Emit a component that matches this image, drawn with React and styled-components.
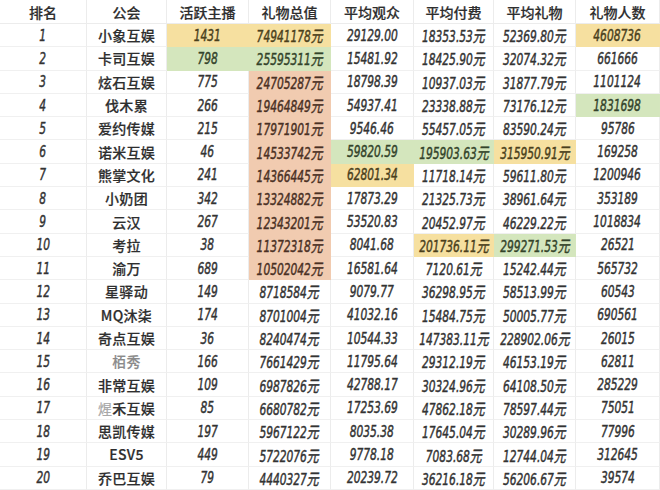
import React from 'react';
import styled, { createGlobalStyle } from 'styled-components';

const GlobalStyle = createGlobalStyle`
  html, body {
    margin: 0;
    padding: 0;
    background: #ffffff;
  }
`;

const fills = {
  y: { bg: '#f6e0a0', fg: '#4a3f1c' },
  g: { bg: '#d4e6bd', fg: '#33432a' },
  o: { bg: '#f1cbb0', fg: '#4a3024' },
};

const headers = ['排名', '公会', '活跃主播', '礼物总值', '平均观众', '平均付费', '平均礼物', '礼物人数'];

const rows = [
  ['小象互娱', '1431', '74941178元', '29129.00', '18353.53元', '52369.80元', '4608736', { 2: 'y', 3: 'y', 7: 'y' }],
  ['卡司互娱', '798', '25595311元', '15481.92', '18425.90元', '32074.32元', '661666', { 2: 'g', 3: 'g' }],
  ['炫石互娱', '775', '24705287元', '18798.39', '10937.03元', '31877.79元', '1101124', { 3: 'o' }],
  ['伐木累', '266', '19464849元', '54937.41', '23338.88元', '73176.12元', '1831698', { 3: 'o', 7: 'g' }],
  ['爱约传媒', '215', '17971901元', '9546.46', '55457.05元', '83590.24元', '95786', { 3: 'o' }],
  ['诺米互娱', '46', '14533742元', '59820.59', '195903.63元', '315950.91元', '169258', { 3: 'o', 4: 'g', 5: 'g', 6: 'y' }],
  ['熊掌文化', '241', '14366445元', '62801.34', '11718.14元', '59611.80元', '1200946', { 3: 'o', 4: 'y' }],
  ['小奶团', '342', '13324882元', '17873.29', '21325.73元', '38961.64元', '353189', { 3: 'o' }],
  ['云汉', '267', '12343201元', '53520.83', '20452.97元', '46229.22元', '1018834', { 3: 'o' }],
  ['考拉', '38', '11372318元', '8041.68', '201736.11元', '299271.53元', '26521', { 3: 'o', 5: 'y', 6: 'g' }],
  ['渝万', '689', '10502042元', '16581.64', '7120.61元', '15242.44元', '565732', { 3: 'o' }],
  ['星驿动', '149', '8718584元', '9079.77', '36298.95元', '58513.99元', '60543', {}],
  ['MQ沐柒', '174', '8701004元', '41032.16', '15484.75元', '50005.77元', '690561', {}],
  ['奇点互娱', '36', '8240474元', '10544.33', '147383.11元', '228902.06元', '26015', {}],
  ['栢秀', '166', '7661429元', '11795.64', '29312.19元', '46153.19元', '62811', {}],
  ['非常互娱', '109', '6987826元', '42788.17', '30324.96元', '64108.50元', '285229', {}],
  ['煋禾互娱', '85', '6680782元', '17253.69', '47862.18元', '78597.44元', '75051', {}],
  ['思凯传媒', '197', '5967122元', '8035.38', '17645.04元', '30289.96元', '77996', {}],
  ['ESV5', '449', '5722076元', '9778.18', '7083.68元', '12744.04元', '312645', {}],
  ['乔巴互娱', '79', '4440327元', '20239.72', '36216.18元', '56206.67元', '39574', {}],
];

const Table = styled.div`
  display: grid;
  grid-template-columns: 87px 80px 82px 82px 83px 80px 82px 84px;
  grid-template-rows: 24px repeat(20, 23.3px);
  width: 660px;
  height: 490px;
  background: #ffffff;
`;

const HeadCell = styled.div`
  display: flex;
  align-items: center;
  justify-content: center;
  border-right: 1px solid #ececec;
  border-bottom: 1px solid #ececec;
  font-family: 'Noto Sans CJK SC', sans-serif;
  font-weight: 500;
  font-size: 14px;
  color: #2e2e2e;
  -webkit-text-stroke: 0.2px currentColor;
`;

const Cell = styled.div`
  display: flex;
  align-items: center;
  justify-content: center;
  white-space: nowrap;
  background: ${(p) => (p.$fill ? fills[p.$fill].bg : '#ffffff')};
  color: ${(p) => (p.$fill ? fills[p.$fill].fg : '#333333')};
  border-right: 1px solid ${(p) => (p.$fill ? fills[p.$fill].bg : '#ececec')};
  border-bottom: 1px solid ${(p) => (p.$fill ? fills[p.$fill].bg : '#f0f0f0')};
`;

const Num = styled.span`
  display: inline-block;
  font-family: 'DejaVu Sans Condensed', 'DejaVu Sans', 'Noto Sans CJK SC', sans-serif;
  font-style: italic;
  font-size: 16px;
  transform: scaleX(0.74);
  transform-origin: center;
  -webkit-text-stroke: 0.45px currentColor;
`;

const NameCell = styled(Cell)`
  font-family: 'Noto Sans CJK SC', sans-serif;
  font-weight: 500;
  font-size: 14px;
  letter-spacing: 0.3px;
  color: ${(p) => (p.$faint ? '#8a8a8a' : '#2e2e2e')};
  -webkit-text-stroke: 0.2px currentColor;
`;

const Faint = styled.span`
  color: #a8a8a8;
  font-weight: 400;
`;

function Name({ text }) {
  if (text === '栢秀') return <NameCell $faint>{text}</NameCell>;
  if (text === '煋禾互娱')
    return (
      <NameCell>
        <Faint>煋</Faint>禾互娱
      </NameCell>
    );
  return <NameCell>{text}</NameCell>;
}

export default function App() {
  return (
    <>
      <GlobalStyle />
      <Table>
        {headers.map((h) => (
          <HeadCell key={h}>{h}</HeadCell>
        ))}
        {rows.map((r, i) => {
          const hl = r[7];
          return (
            <React.Fragment key={i}>
              <Cell>
                <Num>{i + 1}</Num>
              </Cell>
              <Name text={r[0]} />
              {r.slice(1, 7).map((v, j) => (
                <Cell key={j} $fill={hl[j + 2]}>
                  <Num>{v}</Num>
                </Cell>
              ))}
            </React.Fragment>
          );
        })}
      </Table>
    </>
  );
}
